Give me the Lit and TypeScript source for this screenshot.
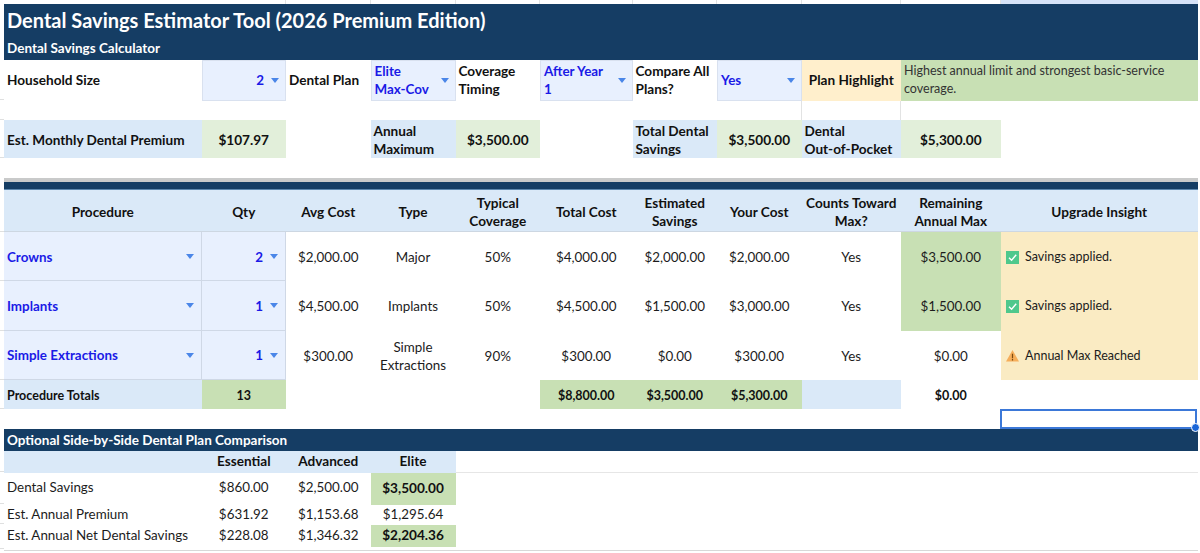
import { LitElement, html, css } from "lit";
import { customElement } from "lit/decorators.js";

const arrow = html`<svg class="arrow" width="8" height="5" viewBox="0 0 8 5"><path d="M0 0H8L4 5Z" fill="#4a86e8"/></svg>`;
const check = html`<svg class="ico" width="13" height="13" viewBox="0 0 13 13"><rect width="13" height="13" fill="#4fc88c"/><path d="M3 6.7L5.6 9.3L10.2 3.8" fill="none" stroke="#fff" stroke-width="1.4"/></svg>`;
const warn = html`<svg class="ico" width="13" height="13" viewBox="0 0 13 13"><path d="M6.5 1L13 12.5H0Z" fill="#f6ae5a"/><path d="M6.5 4.8V9M6.5 9.8V11.4" stroke="#7a4a10" stroke-width="1.2"/></svg>`;

const procs = [
  { n: "Crowns", q: "2", a: "$2,000.00", t: "Major", c: "50%", tc: "$4,000.00", s: "$2,000.00", y: "$2,000.00", r: "$3,500.00", rg: true, i: "Savings applied.", ok: true },
  { n: "Implants", q: "1", a: "$4,500.00", t: "Implants", c: "50%", tc: "$4,500.00", s: "$1,500.00", y: "$3,000.00", r: "$1,500.00", rg: true, i: "Savings applied.", ok: true },
  { n: "Simple Extractions", q: "1", a: "$300.00", t: "Simple Extractions", c: "90%", tc: "$300.00", s: "$0.00", y: "$300.00", r: "$0.00", rg: false, i: "Annual Max Reached", ok: false },
];
const railRows = [100, 20, 38, 74, 49, 50, 49, 29, 63, 32, 20, 25];

@customElement("app-root")
export class AppRoot extends LitElement {
  static styles = css`
    :host { display: flex; width: 1200px; height: 553px; overflow: hidden; background: #fff;
      font-family: "Lato", "Liberation Sans", sans-serif; font-size: 13.4px; color: #1c1c1c; position: relative; }
    .rail { width: 4px; flex: none; display: flex; flex-direction: column; }
    .rail div { border-bottom: 1px solid #dfe0e0; box-sizing: border-box; }
    .sheet { width: 1194px; flex: none; }
    .row { display: grid; grid-template-columns: 197.5px 84.5px 84.5px 85px 84.5px 92.5px 84.5px 84.5px 99.5px 99.5px 197.5px; }
    .top { height: 4px; }
    .topsel { background: #d6e3f8; }
    .c { display: flex; align-items: center; justify-content: center; text-align: center; padding: 1px 3px 0; box-sizing: border-box; line-height: 18px; min-width: 0; }
    .l { justify-content: flex-start; text-align: left; }
    .b { font-weight: 700; font-size: 13.6px; color: #111; }
    .s { font-size: 12.5px; }
    .wide { grid-column: span 2; }
    .title { height: 34px; background: #153d64; color: #fff; font-size: 20px; font-weight: 700; display: flex; align-items: center; padding: 0 3px 2px; box-sizing: border-box; }
    .sub { height: 22px; background: #153d64; color: #fff; font-size: 13.5px; font-weight: 700; display: flex; align-items: center; padding: 0 3px; box-sizing: border-box; }
    .sub.first { padding-bottom: 2px; }
    .r1 { height: 41px; } .gap1 { height: 19px; } .r2 { height: 38px; } .gap2 { height: 20px; }
    .r1 .c { padding-top: 0; padding-bottom: 1px; }
    .rule { height: 4px; background: #c9caca; }
    .navy { height: 7px; background: #153d64; border-bottom: 1px solid #5d87ad; }
    .hd { height: 42px; } .pr { height: 49.3px; } .tot { height: 29.5px; } .gap3 { height: 19.5px; }
    .hd .c, .tot .c { padding-top: 2px; }
    .chd { height: 22px; } .c1 { height: 32px; } .c2 { height: 20px; } .c3 { height: 22px; } .c4 { height: 3px; border-bottom: 1px solid #d8d8d8; }
    .chd .c, .c2 .c, .c3 .c { padding-top: 0; padding-bottom: 1px; }
    .c1 .c { padding-top: 0; padding-bottom: 3px; }
    .c1 .c.b { padding-bottom: 1px; }
    .inp { background: #e8f0fe; color: #1a1ae6; font-weight: 700; border: 1px solid #d9e1ef; padding: 0 6px 0 3px; justify-content: space-between; gap: 4px; text-align: left; }
    .inp.n { justify-content: flex-end; gap: 7px; }
    .pinp { border-width: 0 1px 1px 0; border-color: #cfd8e6; padding: 1px 7px 0 3px; }
    .arrow { flex: none; }
    .blue { background: #dae9f8; }
    .green { background: #c8e0b4; }
    .lgreen { background: #e2efda; }
    .yel { background: #ffefcc; }
    .ins { background: #faebc3; gap: 6px; padding-left: 5.5px; font-size: 12.5px; }
    .ico { flex: none; }
    .note { font-weight: 400; color: #333; font-size: 12.5px; }
    .hdc { border-bottom: 1px solid #cdd7e2; }
    .gridv { border-right: 1px solid #e2e3e3; }
    .gridb { border-bottom: 1px solid #e6e6e6; grid-column: span 7; }
    .sel { border: 2px solid #3b78d8; box-sizing: border-box; margin-left: -1px; margin-right: 1px; position: relative; }
    .handle { position: absolute; right: -5px; bottom: -5px; width: 9px; height: 9px; border-radius: 50%; background: #1a66d8; border: 1px solid #fff; box-sizing: border-box; z-index: 2; }
  `;

  render() {
    return html`
      <div class="rail">
        ${railRows.map((h) => html`<div style="height:${h}px"></div>`)}
      </div>
      <div class="sheet">
        <div class="row top">
          ${[0, 1, 2, 3, 4, 5, 6, 7, 8].map((i) => html`<div class=${i === 0 ? "" : "gridv"}></div>`)}
          <div class="gridv"></div>
          <div class="topsel"></div>
        </div>
        <div class="title">Dental Savings Estimator Tool (2026 Premium Edition)</div>
        <div class="sub first">Dental Savings Calculator</div>
        <div class="row r1">
          <div class="c l b">Household Size</div>
          <div class="c inp n">2${arrow}</div>
          <div class="c l b">Dental Plan</div>
          <div class="c inp"><span>Elite<br />Max-Cov</span>${arrow}</div>
          <div class="c l b">Coverage Timing</div>
          <div class="c inp"><span>After Year<br />1</span>${arrow}</div>
          <div class="c l b">Compare All Plans?</div>
          <div class="c inp"><span>Yes</span>${arrow}</div>
          <div class="c yel b">Plan Highlight</div>
          <div class="c l green note wide">Highest annual limit and strongest basic-service coverage.</div>
        </div>
        <div class="row gap1">
          ${[0, 1, 2, 3, 4, 5, 6].map(() => html`<div></div>`)}
          <div class="gridv"></div><div class="gridv"></div>
        </div>
        <div class="row r2">
          <div class="c l b blue">Est. Monthly Dental Premium</div>
          <div class="c b lgreen">$107.97</div>
          <div></div>
          <div class="c l b blue">Annual Maximum</div>
          <div class="c b lgreen">$3,500.00</div>
          <div></div>
          <div class="c l b blue">Total Dental Savings</div>
          <div class="c b lgreen">$3,500.00</div>
          <div class="c l b blue"><span>Dental<br />Out-of-Pocket</span></div>
          <div class="c b lgreen">$5,300.00</div>
        </div>
        <div class="gap2"></div>
        <div class="rule"></div>
        <div class="navy"></div>
        <div class="row hd">
          ${["Procedure", "Qty", "Avg Cost", "Type", "Typical Coverage", "Total Cost", "Estimated Savings", "Your Cost", "Counts Toward Max?", "Remaining Annual Max", "Upgrade Insight"].map(
            (h) => html`<div class="c b blue hdc">${h}</div>`
          )}
        </div>
        ${procs.map(
          (p) => html`
            <div class="row pr">
              <div class="c inp pinp"><span>${p.n}</span>${arrow}</div>
              <div class="c inp n pinp">${p.q}${arrow}</div>
              <div class="c">${p.a}</div>
              <div class="c">${p.t}</div>
              <div class="c">${p.c}</div>
              <div class="c">${p.tc}</div>
              <div class="c">${p.s}</div>
              <div class="c">${p.y}</div>
              <div class="c">Yes</div>
              <div class="c ${p.rg ? "green" : ""}">${p.r}</div>
              <div class="c l ins">${p.ok ? check : warn}<span>${p.i}</span></div>
            </div>
          `
        )}
        <div class="row tot">
          <div class="c l b s blue">Procedure Totals</div>
          <div class="c b s green">13</div>
          <div></div><div></div><div></div>
          <div class="c b s green">$8,800.00</div>
          <div class="c b s green">$3,500.00</div>
          <div class="c b s green">$5,300.00</div>
          <div class="blue"></div>
          <div class="c b s">$0.00</div>
          <div></div>
        </div>
        <div class="row gap3">
          ${[0, 1, 2, 3, 4, 5, 6, 7, 8, 9].map(() => html`<div></div>`)}
          <div class="sel"><div class="handle"></div></div>
        </div>
        <div class="sub">Optional Side-by-Side Dental Plan Comparison</div>
        <div class="row chd">
          <div class="blue"></div>
          <div class="c b blue">Essential</div>
          <div class="c b blue">Advanced</div>
          <div class="c b blue">Elite</div>
          <div class="gridb"></div>
        </div>
        <div class="row c1">
          <div class="c l">Dental Savings</div><div class="c">$860.00</div><div class="c">$2,500.00</div><div class="c b green">$3,500.00</div>
        </div>
        <div class="row c2">
          <div class="c l">Est. Annual Premium</div><div class="c">$631.92</div><div class="c">$1,153.68</div><div class="c">$1,295.64</div>
        </div>
        <div class="row c3">
          <div class="c l">Est. Annual Net Dental Savings</div><div class="c">$228.08</div><div class="c">$1,346.32</div><div class="c b green">$2,204.36</div>
        </div>
        <div class="c4"></div>
      </div>
    `;
  }
}
